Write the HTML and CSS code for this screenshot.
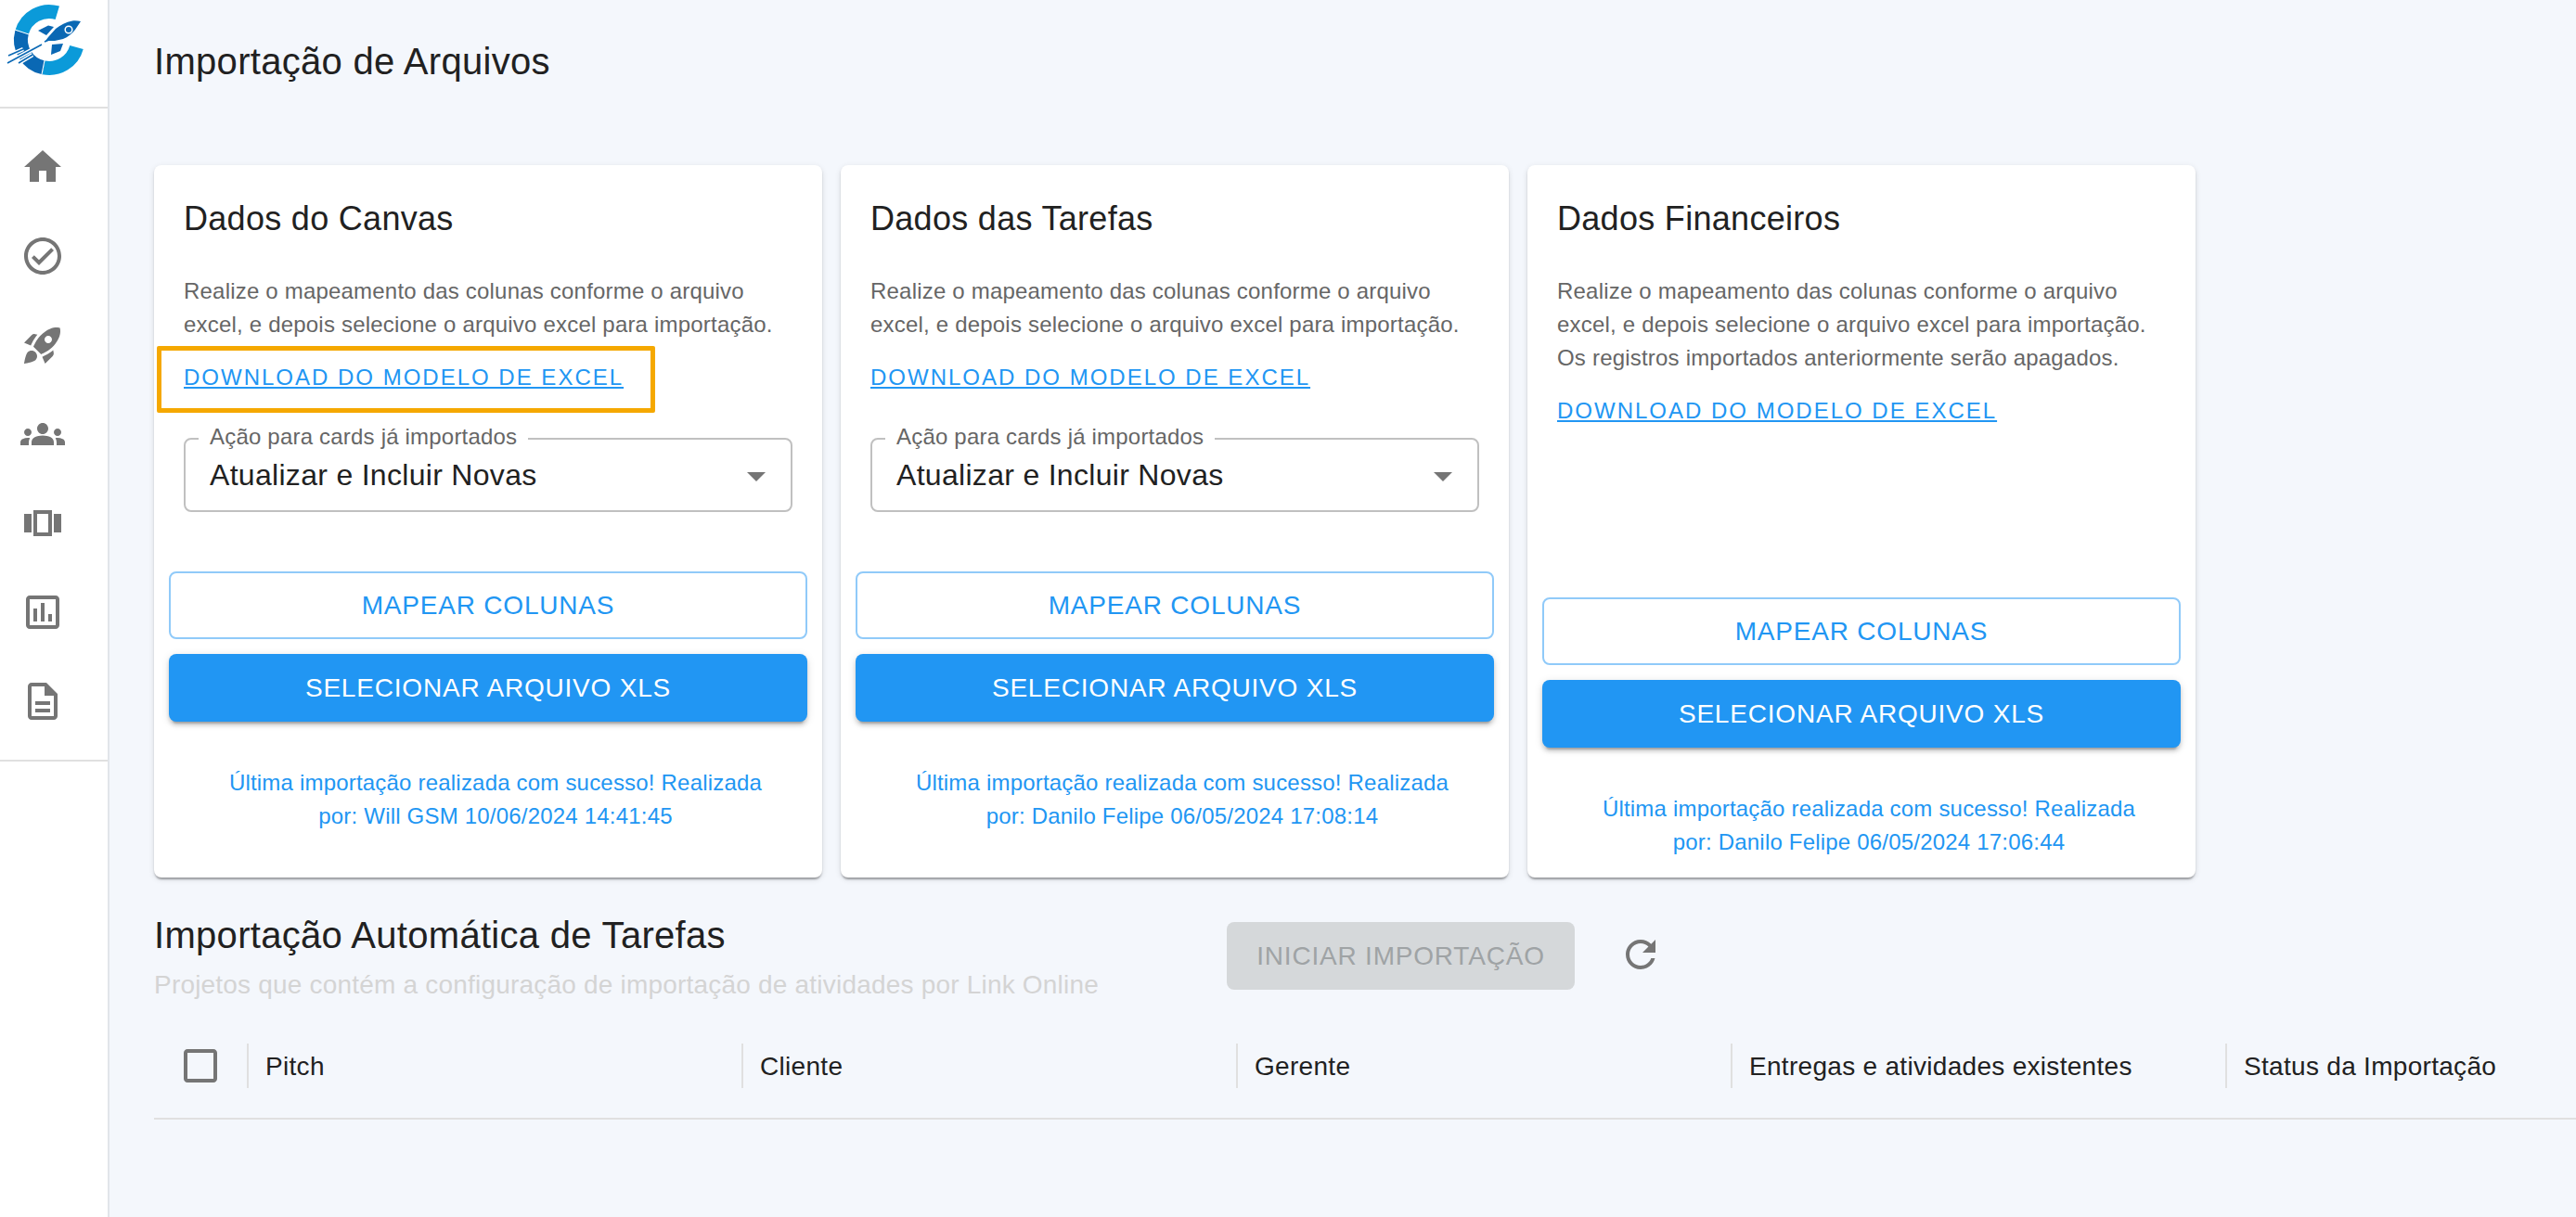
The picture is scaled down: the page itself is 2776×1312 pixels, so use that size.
FILE: index.html
```html
<!DOCTYPE html>
<html lang="pt-BR">
<head>
<meta charset="utf-8">
<title>Importação de Arquivos</title>
<link rel="stylesheet" href="styles.css">
</head>
<body>
<div class="app">
  <aside class="sidebar">
    <div class="logo-box">
      <svg class="logo" viewBox="0 0 100 90" width="100" height="90">
        <path class="arc-light" d="M61.8 13.8A30.5 30.5 0 0 0 23.6 34.8"/>
        <path class="arc-dark" d="M23.6 34.8A30.5 30.5 0 0 0 47 72.9"/>
        <path class="arc-light" d="M47 72.9A30.5 30.5 0 0 0 82.5 51"/>
        <path class="joint" d="M16 32 31 37M45 80 48 65"/>
        <path class="trail-halo" d="M9 60 25 53M8 68 45 48M20 68 35 59"/>
        <path class="trail" d="M9 60 25 53M8 68 45 48M48 45 65 38M20 68 35 59"/>
        <path class="rocket" d="M87 23C84 22.500 81 22 78 22.500C71 23.500 65 27 60 31L52 40 49 44 59 44 68 42C73 40 78 36 81 32Z"/>
        <path class="rocket" d="M41 33 52 27.500 58 29 50 38Z"/>
        <path class="rocket" d="M55 59 56 48 68 47 65 55Z"/>
        <circle class="rocket-window" cx="74" cy="32" r="3.800"/>
      </svg>
    </div>
    <nav class="nav">
      <svg class="icon nav-icon" viewBox="0 0 24 24"><path d="M10 20v-6h4v6h5v-8h3L12 3 2 12h3v8z"/></svg>
      <svg class="icon nav-icon" viewBox="0 0 24 24"><path d="M12 2C6.48 2 2 6.48 2 12s4.48 10 10 10 10-4.48 10-10S17.52 2 12 2zm0 18c-4.41 0-8-3.59-8-8s3.59-8 8-8 8 3.59 8 8-3.59 8-8 8zm4.59-12.42L10 14.17l-2.59-2.58L6 13l4 4 8-8-1.41-1.42z"/></svg>
      <svg class="icon nav-icon" viewBox="0 0 24 24"><path d="M9.19 6.35c-2.04 2.29-3.44 5.58-3.57 5.89L2 10.69l4.05-4.05c.47-.47 1.15-.68 1.81-.55l1.33.26zM11.17 17s3.74-1.55 5.89-3.7c5.4-5.4 4.5-9.62 4.21-10.57-.95-.3-5.17-1.19-10.57 4.21C8.55 9.09 7 12.83 7 12.83L11.17 17zm6.48-2.19c-2.29 2.04-5.58 3.44-5.89 3.57L13.31 22l4.05-4.05c.47-.47.68-1.15.55-1.81l-.26-1.33zM9 18c0 .83-.34 1.58-.88 2.12C6.94 21.3 2 22 2 22s.7-4.94 1.88-6.12C4.42 15.34 5.17 15 6 15c1.66 0 3 1.34 3 3zm4-9c0-1.1.9-2 2-2s2 .9 2 2-.9 2-2 2-2-.9-2-2z"/></svg>
      <svg class="icon nav-icon" viewBox="0 0 24 24"><path d="M12 12.75c1.63 0 3.07.39 4.24.9 1.08.48 1.76 1.56 1.76 2.73V18H6v-1.61c0-1.18.68-2.26 1.76-2.73 1.17-.52 2.61-.91 4.24-.91zM4 13c1.1 0 2-.9 2-2s-.9-2-2-2-2 .9-2 2 .9 2 2 2zm1.13 1.1c-.37-.06-.74-.1-1.13-.1-.99 0-1.93.21-2.78.58C.48 14.9 0 15.62 0 16.43V18h4.5v-1.61c0-.83.23-1.61.63-2.29zM20 13c1.1 0 2-.9 2-2s-.9-2-2-2-2 .9-2 2 .9 2 2 2zm4 3.43c0-.81-.48-1.53-1.22-1.85-.85-.37-1.79-.58-2.78-.58-.39 0-.76.04-1.13.1.4.68.63 1.46.63 2.29V18H24v-1.57zM12 12c-1.66 0-3-1.34-3-3s1.34-3 3-3 3 1.34 3 3-1.34 3-3 3z"/></svg>
      <svg class="icon nav-icon" viewBox="0 0 24 24"><path d="M2 7h4v10H2V7zm5 12h10V5H7v14zm2-12h6v10H9V7zm9 0h4v10h-4V7z"/></svg>
      <svg class="icon nav-icon" viewBox="0 0 24 24"><path d="M19 3H5c-1.1 0-2 .9-2 2v14c0 1.1.9 2 2 2h14c1.1 0 2-.9 2-2V5c0-1.1-.9-2-2-2zm0 16H5V5h14v14zM7 10h2v7H7zm4-3h2v10h-2zm4 6h2v4h-2z"/></svg>
      <svg class="icon nav-icon" viewBox="0 0 24 24"><path d="M8 16h8v2H8zm0-4h8v2H8zm6-10H6c-1.1 0-2 .9-2 2v16c0 1.1.89 2 1.99 2H18c1.1 0 2-.9 2-2V8l-6-6zm4 18H6V4h7v5h5v11z"/></svg>
    </nav>
  </aside>

  <main class="content">
    <h1 class="page-title">Importação de Arquivos</h1>

    <section class="cards">
      <article class="card card-select">
        <h2 class="card-title">Dados do Canvas</h2>
        <p class="card-text">Realize o mapeamento das colunas conforme o arquivo excel, e depois selecione o arquivo excel para importação.</p>
        <a class="download" href="#">DOWNLOAD DO MODELO DE EXCEL</a>
        <div class="highlight"></div>
        <div class="select">
          <span class="select-label">Ação para cards já importados</span>
          <span class="select-value">Atualizar e Incluir Novas</span>
          <svg class="select-arrow" viewBox="0 0 24 24"><path d="M7 10l5 5 5-5z"/></svg>
        </div>
        <div class="actions">
          <button class="btn btn-outline">MAPEAR COLUNAS</button>
          <button class="btn btn-primary">SELECIONAR ARQUIVO XLS</button>
        </div>
        <p class="status">Última importação realizada com sucesso! Realizada por: Will GSM 10/06/2024 14:41:45</p>
      </article>

      <article class="card card-select">
        <h2 class="card-title">Dados das Tarefas</h2>
        <p class="card-text">Realize o mapeamento das colunas conforme o arquivo excel, e depois selecione o arquivo excel para importação.</p>
        <a class="download" href="#">DOWNLOAD DO MODELO DE EXCEL</a>
        <div class="select">
          <span class="select-label">Ação para cards já importados</span>
          <span class="select-value">Atualizar e Incluir Novas</span>
          <svg class="select-arrow" viewBox="0 0 24 24"><path d="M7 10l5 5 5-5z"/></svg>
        </div>
        <div class="actions">
          <button class="btn btn-outline">MAPEAR COLUNAS</button>
          <button class="btn btn-primary">SELECIONAR ARQUIVO XLS</button>
        </div>
        <p class="status">Última importação realizada com sucesso! Realizada por: Danilo Felipe 06/05/2024 17:08:14</p>
      </article>

      <article class="card">
        <h2 class="card-title">Dados Financeiros</h2>
        <p class="card-text">Realize o mapeamento das colunas conforme o arquivo excel, e depois selecione o arquivo excel para importação. Os registros importados anteriormente serão apagados.</p>
        <a class="download" href="#">DOWNLOAD DO MODELO DE EXCEL</a>
        <div class="actions">
          <button class="btn btn-outline">MAPEAR COLUNAS</button>
          <button class="btn btn-primary">SELECIONAR ARQUIVO XLS</button>
        </div>
        <p class="status">Última importação realizada com sucesso! Realizada por: Danilo Felipe 06/05/2024 17:06:44</p>
      </article>
    </section>

    <section class="auto-head">
      <div class="auto-text">
        <h2 class="auto-title">Importação Automática de Tarefas</h2>
        <p class="auto-sub">Projetos que contém a configuração de importação de atividades por Link Online</p>
      </div>
      <button class="btn-disabled" disabled>INICIAR IMPORTAÇÃO</button>
      <svg class="icon refresh" viewBox="0 0 24 24"><path d="M17.65 6.35C16.2 4.9 14.21 4 12 4c-4.42 0-7.99 3.58-7.99 8s3.57 8 7.99 8c3.73 0 6.84-2.55 7.73-6h-2.08c-.82 2.33-3.04 4-5.65 4-3.31 0-6-2.69-6-6s2.69-6 6-6c1.66 0 3.14.69 4.22 1.78L13 11h7V4l-2.35 2.35z"/></svg>
    </section>

    <div class="table-head">
      <div class="th th-check">
        <svg class="icon check" viewBox="0 0 24 24"><path d="M19 5v14H5V5h14m0-2H5c-1.1 0-2 .9-2 2v14c0 1.1.9 2 2 2h14c1.1 0 2-.9 2-2V5c0-1.1-.9-2-2-2z"/></svg>
      </div>
      <div class="th"><span class="th-label">Pitch</span></div>
      <div class="th"><span class="th-label">Cliente</span></div>
      <div class="th"><span class="th-label">Gerente</span></div>
      <div class="th"><span class="th-label">Entregas e atividades existentes</span></div>
      <div class="th"><span class="th-label">Status da Importação</span></div>
    </div>
  </main>
</div>
</body>
</html>
```

FILE: styles.css
```css
* { box-sizing: border-box; }
html, body { margin: 0; height: 100%; }
body {
  font-family: "Liberation Sans", Arial, sans-serif;
  background: #f4f7fc;
  color: #212121;
  overflow: hidden;
}
.app { display: flex; height: 100vh; }

.sidebar {
  flex: 0 0 118px;
  background: #fff;
  border-right: 2px solid #e1e5ea;
  display: flex;
  flex-direction: column;
}
.logo-box { height: 117px; border-bottom: 2px solid #e0e0e0; overflow: hidden; }
.logo { display: block; }
.arc-light { fill: none; stroke: #0b9ad9; stroke-width: 15; }
.arc-dark { fill: none; stroke: #0a68b4; stroke-width: 15; }
.joint { fill: none; stroke: #fff; stroke-width: 1; }
.rocket { fill: #0a68b4; }
.rocket-window { fill: #0a68b4; stroke: #fff; stroke-width: 1.5; }
.trail-halo { fill: none; stroke: #fff; stroke-width: 4.5; }
.trail { fill: none; stroke: #0a68b4; stroke-width: 1.6; }

.nav {
  display: flex;
  flex-direction: column;
  align-items: flex-start;
  gap: 48px;
  padding: 39px 0 39px 22px;
  border-bottom: 2px solid #e0e0e0;
}
.icon { display: block; width: 48px; height: 48px; fill: #757575; flex: none; }

.content { flex: 1; min-width: 0; padding-left: 48px; overflow: hidden; }
.page-title {
  margin: 0;
  padding-top: 36px;
  height: 178px;
  font-size: 40px;
  line-height: 60px;
  font-weight: 400;
  letter-spacing: .3px;
}

.cards { display: flex; gap: 20px; }
.card {
  position: relative;
  width: 720px;
  height: 768px;
  padding: 29px 16px 20px;
  background: #fff;
  border-radius: 8px;
  box-shadow: 0 4px 2px -2px rgba(0,0,0,.2), 0 2px 2px 0 rgba(0,0,0,.14), 0 2px 6px 0 rgba(0,0,0,.12);
  display: flex;
  flex-direction: column;
  align-items: flex-start;
}
.card-select { padding-bottom: 48px; }
.card-title {
  margin: 0 16px;
  font-size: 36px;
  line-height: 58px;
  font-weight: 400;
  letter-spacing: .3px;
}
.card-text {
  margin: 31px 16px 0;
  font-size: 24px;
  line-height: 36px;
  letter-spacing: .2px;
  color: #666;
}
.download {
  margin: 21px 16px 0;
  font-size: 24px;
  line-height: 36px;
  letter-spacing: 2px;
  color: #2196f3;
  text-decoration: underline;
}
.highlight {
  position: absolute;
  left: 3px;
  top: 195px;
  width: 537px;
  height: 72px;
  border: 5px solid #f5a800;
  border-radius: 2px;
}
.select {
  position: relative;
  align-self: stretch;
  margin: 47px 16px 0;
  height: 80px;
  border: 2px solid #c0c0c0;
  border-radius: 8px;
  display: flex;
  align-items: center;
  padding: 0 26px;
}
.select-label {
  position: absolute;
  left: 14px;
  top: -18px;
  padding: 0 12px;
  background: #fff;
  font-size: 24px;
  line-height: 30px;
  letter-spacing: .2px;
  color: #666;
}
.select-value { font-size: 32px; line-height: 40px; letter-spacing: .3px; }
.select-arrow { position: absolute; right: 13px; top: 15px; width: 48px; height: 48px; fill: #757575; }

.actions {
  margin-top: auto;
  align-self: stretch;
  display: flex;
  flex-direction: column;
  gap: 16px;
}
.btn {
  height: 73px;
  width: 100%;
  border-radius: 8px;
  font-family: inherit;
  font-size: 28px;
  letter-spacing: .8px;
  padding: 0;
}
.btn-outline { background: #fff; color: #2196f3; border: 2px solid #90caf9; }
.btn-primary {
  background: #2196f3;
  color: #fff;
  border: 0;
  box-shadow: 0 6px 2px -4px rgba(0,0,0,.2), 0 4px 4px 0 rgba(0,0,0,.14), 0 2px 10px 0 rgba(0,0,0,.12);
}
.status {
  align-self: stretch;
  margin: 48px 40px 0 56px;
  text-align: center;
  font-size: 24px;
  line-height: 36px;
  letter-spacing: .2px;
  color: #2196f3;
}

.auto-head { display: flex; align-items: flex-start; padding-top: 32px; height: 179px; }
.auto-text { flex: 0 0 1156px; }
.auto-title { margin: 0; font-size: 40px; line-height: 60px; font-weight: 400; letter-spacing: .3px; }
.auto-sub { margin: 6px 0 0; font-size: 28px; line-height: 36px; letter-spacing: .2px; color: #d4d4d4; white-space: nowrap; }
.btn-disabled {
  width: 375px;
  height: 73px;
  margin-top: 16px;
  border: 0;
  border-radius: 8px;
  background: #d5d8da;
  color: #9fa3a5;
  font-family: inherit;
  font-size: 28px;
  letter-spacing: .8px;
}
.refresh { margin: 27px 0 0 47px; }

.table-head {
  display: flex;
  width: 100%;
  height: 82px;
  border-bottom: 2px solid #e0e0e0;
  overflow: hidden;
}
.th { flex: 0 0 533px; height: 48px; padding: 1px 0 0 18px; display: flex; align-items: center; border-left: 2px solid #e0e0e0; font-size: 28px; letter-spacing: .3px; }
.th-check { flex: 0 0 100px; padding: 0 0 0 26px; border-left: 0; }
.th-label { white-space: nowrap; }
```
